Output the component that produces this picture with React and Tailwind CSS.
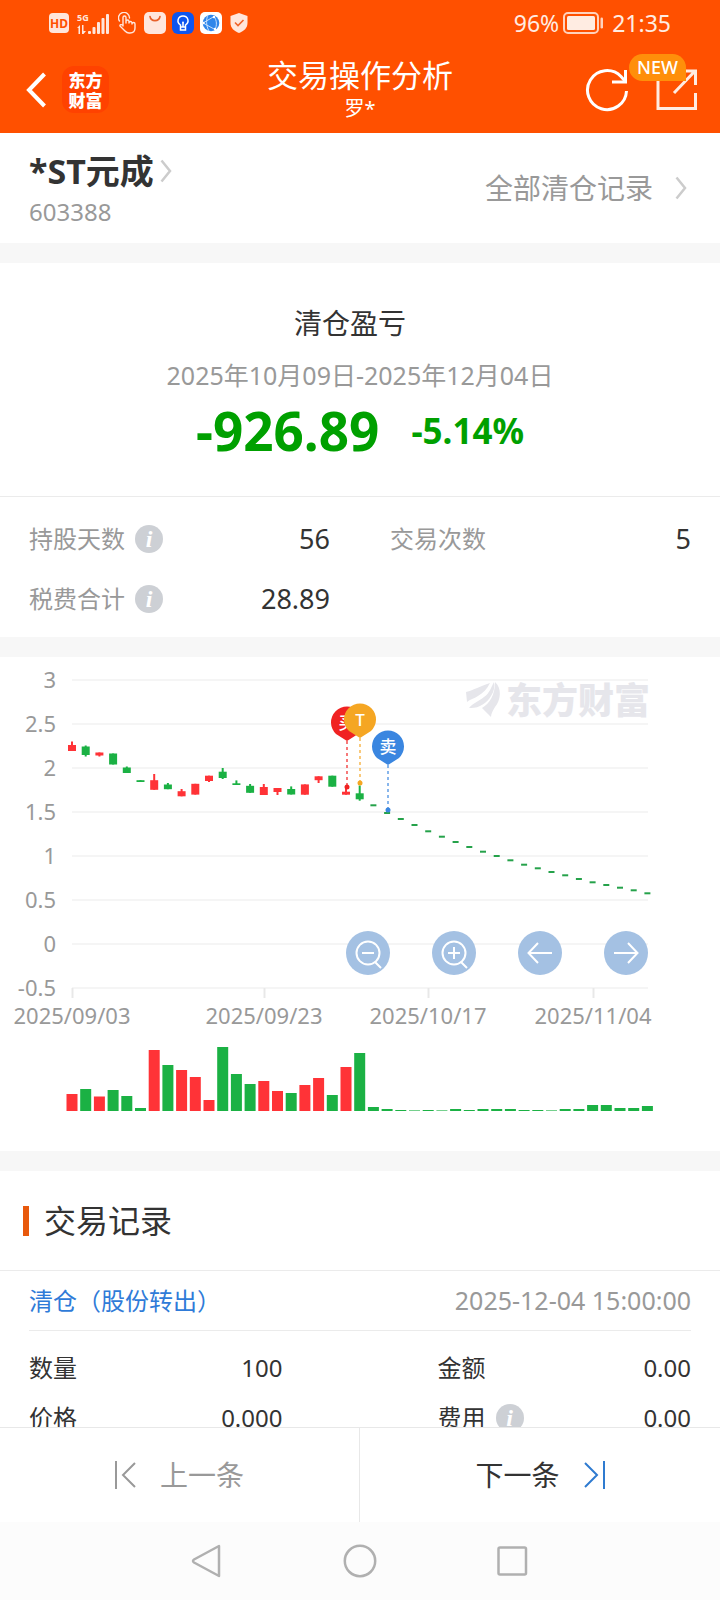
import React from "react";

const UP = "#ff3337";
const DOWN = "#1bb144";

// top/bottom are the body, high/low the wick, in chart units
const candles = [
  { c: UP, top: 88, bottom: 94, high: 84.5, low: 94 },
  { c: DOWN, top: 89.5, bottom: 98, high: 88.5, low: 99.5 },
  { c: UP, top: 95.5, bottom: 98.5, high: 95.5, low: 99.5 },
  { c: DOWN, top: 96.5, bottom: 107.5, high: 96.5, low: 107.5 },
  { c: DOWN, top: 110.5, bottom: 116, high: 109.5, low: 116 },
  { c: DOWN, top: 123.2, bottom: 125, high: 123.2, low: 125 },
  { c: UP, top: 123.2, bottom: 132.8, high: 117, low: 132.8 },
  { c: DOWN, top: 127.5, bottom: 132.2, high: 126, low: 132.2 },
  { c: UP, top: 134.2, bottom: 139.3, high: 132, low: 139.3 },
  { c: UP, top: 126.8, bottom: 137.6, high: 126.8, low: 137.6 },
  { c: UP, top: 118.7, bottom: 124, high: 118.7, low: 125 },
  { c: DOWN, top: 114.7, bottom: 121, high: 111, low: 122 },
  { c: DOWN, top: 126.3, bottom: 128, high: 123.4, low: 128 },
  { c: DOWN, top: 128.8, bottom: 135.8, high: 127, low: 135.8 },
  { c: UP, top: 130, bottom: 138, high: 127, low: 138 },
  { c: UP, top: 131, bottom: 135, high: 131, low: 138 },
  { c: DOWN, top: 132, bottom: 137.5, high: 129.4, low: 137.5 },
  { c: UP, top: 127.4, bottom: 137.7, high: 127.4, low: 137.7 },
  { c: UP, top: 119.3, bottom: 123.2, high: 119.3, low: 126 },
  { c: DOWN, top: 118.7, bottom: 129.7, high: 118.7, low: 129.7 },
  { c: UP, top: 134.7, bottom: 137.7, high: 131.3, low: 137.7 },
  { c: DOWN, top: 136.3, bottom: 142.3, high: 128.5, low: 143.7 },
];

// one-price limit-down days
const limitDays = [
  148.3, 156, 162, 168, 174.3, 179.7, 185, 190, 194.7, 199, 203.3, 207.7, 211.3,
  215, 218.3, 222, 225.3, 228, 230.7, 233.3, 236.3,
];

const volumes = [
  17, 22, 14.5, 21, 15, 3, 61, 46, 41, 34, 11, 64, 37, 27, 30, 20, 18, 26, 33,
  16, 44, 58, 4, 2, 1, 0.6, 1, 0.6, 2, 1, 2, 2, 2, 1, 1, 0.6, 2, 2, 6, 6, 3, 3, 5,
];

const yLabels = ["3", "2.5", "2", "1.5", "1", "0.5", "0", "-0.5"];

const xLabels = [
  { x: 72, text: "2025/09/03" },
  { x: 264, text: "2025/09/23" },
  { x: 428, text: "2025/10/17" },
  { x: 593, text: "2025/11/04" },
];

const pins = [
  { x: 347, y: 66, dot: 130, text: "买", color: "#f02222" },
  { x: 360, y: 63, dot: 126, text: "T", color: "#f5a623" },
  { x: 388, y: 90, dot: 153, text: "卖", color: "#3a86e0" },
];

const dayX = (i) => 72 + i * 13.7;

function StatusBar() {
  return (
    <div className="flex h-[46px] items-center justify-between pl-[49px] pr-[49px] text-[#ffece2]">
      <div className="flex items-center gap-2">
        <svg width="20" height="20" viewBox="0 0 20 20">
          <rect width="20" height="20" rx="4" fill="#ffe6dc" />
          <text x="10" y="14.5" textAnchor="middle" fontSize="12" fontWeight="700" fill="#ff5000">
            HD
          </text>
        </svg>
        <svg width="33" height="24" viewBox="0 -2 33 24" fill="#ffe6dc" overflow="visible">
          <text x="0" y="8" fontSize="9" fontWeight="700">
            5G
          </text>
          <path d="M0 15l3-3v9H1.500v-6zM5 12h1.500v6H9l-2.500 3H5z" />
          <rect x="11" y="18" width="3" height="3" rx="1" />
          <rect x="15.500" y="14" width="3" height="7" rx="1" />
          <rect x="20" y="9" width="3" height="12" rx="1" />
          <rect x="24.500" y="5" width="3" height="16" rx="1" />
          <rect x="29" y="1" width="3" height="20" rx="1" />
        </svg>
        <svg width="18" height="22" viewBox="0 0 18 22" fill="none" stroke="#ffe6dc" strokeWidth="1.400" strokeLinecap="round" strokeLinejoin="round">
          <path d="M1.500 9A5.500 5.500 0 1 1 11.500 6" />
          <path d="M5 14V5.500a1.500 1.500 0 0 1 3 0V11l0-1.500a1.500 1.500 0 0 1 3 0v1.500a1.500 1.500 0 0 1 3 0v1a1.500 1.500 0 0 1 3 0v4c0 3-2 5-5 5h-1c-2 0-3-1-4-2l-5-5c-.500-1.500 1.500-2 3-.500z" />
        </svg>
        <svg width="22" height="22" viewBox="0 0 22 22">
          <rect width="22" height="22" rx="5" fill="#ffe6dc" />
          <path d="M6 4.500c1 5.500 9 5.500 10 0" fill="none" stroke="#e8602a" strokeWidth="1.600" strokeLinecap="round" />
        </svg>
        <svg width="22" height="22" viewBox="0 0 22 22" className="-ml-0.5" fill="none" stroke="#fff" strokeWidth="1.500">
          <rect width="22" height="22" rx="6" fill="#0d55ef" stroke="none" />
          <path d="M8.500 15v-2C4 10 6 4 11 4s7 6 2.500 9v2zM8.500 15v3h5v-3" />
          <path d="M11 15v-4" />
          <circle cx="11" cy="10.500" r="1" fill="#fff" stroke="none" />
        </svg>
        <svg width="22" height="22" viewBox="0 0 22 22" className="-ml-0.5">
          <rect width="22" height="22" rx="5" fill="#fff" />
          <circle cx="11" cy="11" r="8.300" fill="#2f86ea" />
          <path d="M3 11L14 4.500M3 11l12 6.500M14 4.500c3 4 3 9 1 13M8 3c-2 4-2 11 1 16" fill="none" stroke="#d5e9ff" strokeWidth="0.900" />
          <circle cx="14" cy="5" r="1.200" fill="#fff" />
          <circle cx="15" cy="17" r="1.200" fill="#fff" />
          <circle cx="3.500" cy="11" r="1.200" fill="#fff" />
        </svg>
        <svg width="18" height="20" viewBox="0 0 18 20">
          <path d="M9 0l8.500 3v7c0 5-3.500 8-8.500 10C4 18 .5 15 .5 10V3z" fill="#ffe6dc" />
          <path d="M5 9.500l3 3 5.500-5.500" fill="none" stroke="#f0642c" strokeWidth="1.600" />
        </svg>
      </div>
      <div className="flex items-center gap-1 text-[23px]">
        <span>96%</span>
        <svg width="41" height="22" viewBox="0 0 41 22">
          <rect x="1" y="1" width="34" height="20" rx="4" fill="none" stroke="#ffd2bd" strokeWidth="2" />
          <rect x="4" y="4" width="28" height="14" rx="1.500" fill="#ffece2" />
          <rect x="37.500" y="5.500" width="2.500" height="11" rx="1.200" fill="#ffd2bd" />
        </svg>
        <span className="ml-1">21:35</span>
      </div>
    </div>
  );
}

function Header() {
  return (
    <header className="shrink-0 bg-[#ff5000] text-white">
      <StatusBar />
      <div className="grid h-[87px] grid-cols-[1fr_auto_1fr] items-center px-[22px]">
        <div className="flex items-center gap-4">
          <button aria-label="返回">
            <svg width="24" height="36" viewBox="-4 0 24 36" fill="none" stroke="#fff" strokeWidth="4">
              <path d="M18.500 2L3 18l15.500 16" />
            </svg>
          </button>
          <div className="grid size-[47px] place-content-center rounded-xl bg-[#ff4200] font-[family-name:'Noto_Sans_CJK_SC',sans-serif] text-[17px] leading-5 font-black">
            <span className="w-[34px]">东方财富</span>
          </div>
        </div>
        <div className="text-center">
          <h1 className="text-[31px] leading-[38px]">交易操作分析</h1>
          <p className="text-xl leading-[30px]">罗*</p>
        </div>
        <div className="flex items-center justify-end gap-[27px]">
          <button aria-label="刷新">
            <svg width="44" height="44" viewBox="0 0 44 44" fill="none" stroke="#fff" strokeWidth="3">
              <path d="M41.500 23A19.500 19.500 0 1 1 36 8.500L40 13" />
              <path d="M40.500 2v12H27" />
            </svg>
          </button>
          <button aria-label="分享" className="relative">
            <svg width="42" height="42" viewBox="0 0 42 42" fill="none" stroke="#ffece2" strokeWidth="3">
              <path d="M15 2H2v37.500h37.500V24" />
              <path d="M26 2h13.500v14M39 2L18 24" />
            </svg>
            <span className="absolute -top-[15px] right-3 rounded-full rounded-br-md bg-[#ff8f0a] px-2 text-lg leading-[27px] font-medium">
              NEW
            </span>
          </button>
        </div>
      </div>
    </header>
  );
}

function Chevron() {
  return (
    <svg width="12" height="24" viewBox="0 0 12 24" fill="none" stroke="#ccc" strokeWidth="2.500">
      <path d="M1.500 1.500L10 12 1.500 22.500" />
    </svg>
  );
}

function Info() {
  return (
    <button
      aria-label="说明"
      className="ml-2.5 size-7 rounded-full bg-[#cdd0d5] text-center font-[family-name:'Liberation_Serif',serif] text-2xl leading-7 font-bold text-white italic"
    >
      i
    </button>
  );
}

function Gap() {
  return <div className="h-5 bg-[#f7f7f7]" />;
}

function Stat({ label, value, info }) {
  return (
    <div className="flex h-[60px] items-center">
      <dt className="flex items-center text-2xl text-[#999]">
        {label}
        {info && <Info />}
      </dt>
      <dd className="ml-auto text-[27px]">{value}</dd>
    </div>
  );
}

function RecordField({ label, value, info }) {
  return (
    <div className="flex h-[50px] items-center text-2xl">
      <dt className="flex items-center">
        {label}
        {info && <Info />}
      </dt>
      <dd className="ml-auto">{value}</dd>
    </div>
  );
}

function Chart() {
  return (
    <svg viewBox="0 0 720 494" className="block w-full" role="img" aria-label="股价走势">
      {yLabels.map((label, i) => (
        <g key={label}>
          <path d={`M72 ${23 + i * 44}H648`} stroke="#f5f5f5" strokeWidth="2" />
          <text x="56" y={31 + i * 44} textAnchor="end" fontSize="22" fill="#999">
            {label}
          </text>
        </g>
      ))}
      {xLabels.map(({ x, text }) => (
        <g key={text}>
          <path d={`M${x + 0.5} 331v10`} stroke="#e8e8e8" strokeWidth="2" />
          <text x={x} y="367" textAnchor="middle" fontSize="22" fill="#999">
            {text}
          </text>
        </g>
      ))}

      <g fill="#e6e6eb">
        <path d="M466 35c8-2 14-6 24-9-3 6-7 10-12 13-4 3-8 3-11 6z" />
        <path d="M494 25c-3 5-4 11-10 15-5 4-11 6-15 11 9 1 18-5 22-12 3-5 4-9 3-14z" />
        <path d="M495 25c7 6 6 18 0 25-2 3-4 7-4 10l-9-9c8-5 13-13 13-26z" />
        <text x="506" y="57" fontSize="36" fontWeight="900" fontFamily="'Noto Sans CJK SC', sans-serif">
          东方财富
        </text>
      </g>

      {candles.map((k, i) => (
        <g key={i} fill={k.c}>
          <rect x={dayX(i) - 4} y={k.top} width="8" height={k.bottom - k.top} />
          <rect x={dayX(i) - 1} y={k.high} width="2" height={k.low - k.high} />
        </g>
      ))}
      {limitDays.map((y, i) => (
        <rect key={y} x={dayX(i + candles.length) - 3} y={y - 1} width="6" height="2" fill="#25a24a" />
      ))}
      {volumes.map((v, i) => (
        <rect
          key={i}
          x={dayX(i) - 5.5}
          y={454 - v}
          width="11"
          height={v}
          fill={candles[i] ? candles[i].c : DOWN}
        />
      ))}

      {pins.map((p) => (
        <g key={p.text}>
          <path d={`M${p.x} ${p.y + 18}V${p.dot}`} stroke={p.color} strokeWidth="1.200" strokeDasharray="3 3" />
          <circle cx={p.x} cy={p.dot} r="2.500" fill={p.color} />
          <path
            d={`M${p.x} ${p.y + 18}l-11-7a16 16 0 1 1 22 0z`}
            fill={p.color}
          />
          <text x={p.x} y={p.y + 6} textAnchor="middle" fontSize="17" fontWeight="500" fill="#fff">
            {p.text}
          </text>
        </g>
      ))}
    </svg>
  );
}

function ChartButton({ label, children }) {
  return (
    <button aria-label={label} className="size-11 rounded-full bg-[#a4c1e3]">
      <svg viewBox="0 0 44 44" fill="none" stroke="#fff" strokeWidth="2">
        {children}
      </svg>
    </button>
  );
}

function ChartControls() {
  return (
    <div className="absolute top-[274px] right-[10%] flex gap-[42px]">
      <ChartButton label="缩小">
        <circle cx="22" cy="22" r="11.500" />
        <path d="M16 22h12M29 31l6 6" />
      </ChartButton>
      <ChartButton label="放大">
        <circle cx="22" cy="22" r="11.500" />
        <path d="M16 22h12M22 16v12M29 31l6 6" />
      </ChartButton>
      <ChartButton label="左移">
        <path d="M34 22H11M20 12L10.500 22 20 32" />
      </ChartButton>
      <ChartButton label="右移">
        <path d="M10 22h23M24 12l9.500 10L24 32" />
      </ChartButton>
    </div>
  );
}

function Footer() {
  return (
    <footer className="shrink-0">
      <div className="grid h-[95px] grid-cols-2 border-t border-[#e8e8e8] bg-white text-[28px]">
        <button className="flex items-center justify-center gap-6 border-r border-[#e8e8e8] text-[#999]">
          <svg width="21" height="28" viewBox="0 0 21 28" fill="none" stroke="#999" strokeWidth="2">
            <path d="M1 0v28M20 2L8 14l12 12" />
          </svg>
          上一条
        </button>
        <button className="flex items-center justify-center gap-6">
          下一条
          <svg width="21" height="28" viewBox="0 0 21 28" fill="none" stroke="#2f7bd0" strokeWidth="2">
            <path d="M20 0v28M1 2l12 12L1 26" />
          </svg>
        </button>
      </div>
      <nav className="flex h-[78px] items-center justify-center gap-[119px] bg-[#fcfcfc]">
        <button aria-label="后退">
          <svg width="34" height="34" viewBox="0 0 34 34" fill="none" stroke="#b0b0b0" strokeWidth="2.500" strokeLinejoin="round">
            <path d="M29 2v30L4 18.500q-2-1.500 0-3z" />
          </svg>
        </button>
        <button aria-label="主页">
          <svg width="34" height="34" viewBox="0 0 34 34" fill="none" stroke="#b0b0b0" strokeWidth="2.500">
            <circle cx="17" cy="17" r="15.200" />
          </svg>
        </button>
        <button aria-label="最近任务">
          <svg width="34" height="34" viewBox="0 0 34 34" fill="none" stroke="#b0b0b0" strokeWidth="2.500">
            <rect x="2.500" y="3.500" width="27.500" height="27" rx="1.500" />
          </svg>
        </button>
      </nav>
    </footer>
  );
}

export default function App() {
  return (
    <div className="flex h-screen flex-col bg-white font-[family-name:'Noto_Sans','Noto_Sans_CJK_SC',sans-serif] text-[#333]">
      <Header />

      <main className="min-h-0 flex-1 overflow-y-auto [scrollbar-width:none]">
        <section className="flex h-[110px] items-center justify-between px-[29px]">
          <div>
            <a href="#stock" className="flex items-center gap-1.5">
              <h2 className="text-[34px] leading-[46px] font-bold">*ST元成</h2>
              <Chevron />
            </a>
            <p className="mt-0.5 text-2xl text-[#999]">603388</p>
          </div>
          <a href="#closed" className="flex items-center gap-[22px] pr-1 text-[28px] text-[#999]">
            全部清仓记录
            <Chevron />
          </a>
        </section>

        <Gap />

        <section>
          <div className="border-b border-[#ebebeb] pt-10 pb-[35px] text-center">
            <h3 className="pr-5 text-[28px] leading-10">清仓盈亏</h3>
            <p className="mt-4 text-[25px] leading-8 text-[#999]">2025年10月09日-2025年12月04日</p>
            <p className="mt-2.5 flex items-center justify-center gap-8 font-bold text-[#00a000]">
              <span className="text-[53px] leading-[60px]">-926.89</span>
              <span className="text-[35px]">-5.14%</span>
            </p>
          </div>
          <dl className="grid grid-cols-2 gap-x-[60px] px-[29px] pt-3 pb-2">
            <Stat label="持股天数" value="56" info />
            <Stat label="交易次数" value="5" />
            <Stat label="税费合计" value="28.89" info />
          </dl>
        </section>

        <Gap />

        <section className="relative">
          <Chart />
          <ChartControls />
        </section>

        <Gap />

        <section>
          <div className="flex h-[100px] items-center gap-[15px] border-b border-[#ebebeb] pl-[23px]">
            <span className="h-[30px] w-1.5 bg-[#e8590c]" />
            <h3 className="text-[32px]">交易记录</h3>
          </div>
          <div className="px-[29px]">
            <div className="flex h-[60px] items-center justify-between border-b border-[#ebebeb] text-2xl">
              <span className="text-[#2f7bd8]">清仓（股份转出）</span>
              <time className="text-[25px] text-[#999]">2025-12-04 15:00:00</time>
            </div>
            <dl className="grid grid-cols-2 gap-x-[155px] pt-3">
              <RecordField label="数量" value="100" />
              <RecordField label="金额" value="0.00" />
              <RecordField label="价格" value="0.000" />
              <RecordField label="费用" value="0.00" info />
            </dl>
          </div>
        </section>
      </main>

      <Footer />
    </div>
  );
}
